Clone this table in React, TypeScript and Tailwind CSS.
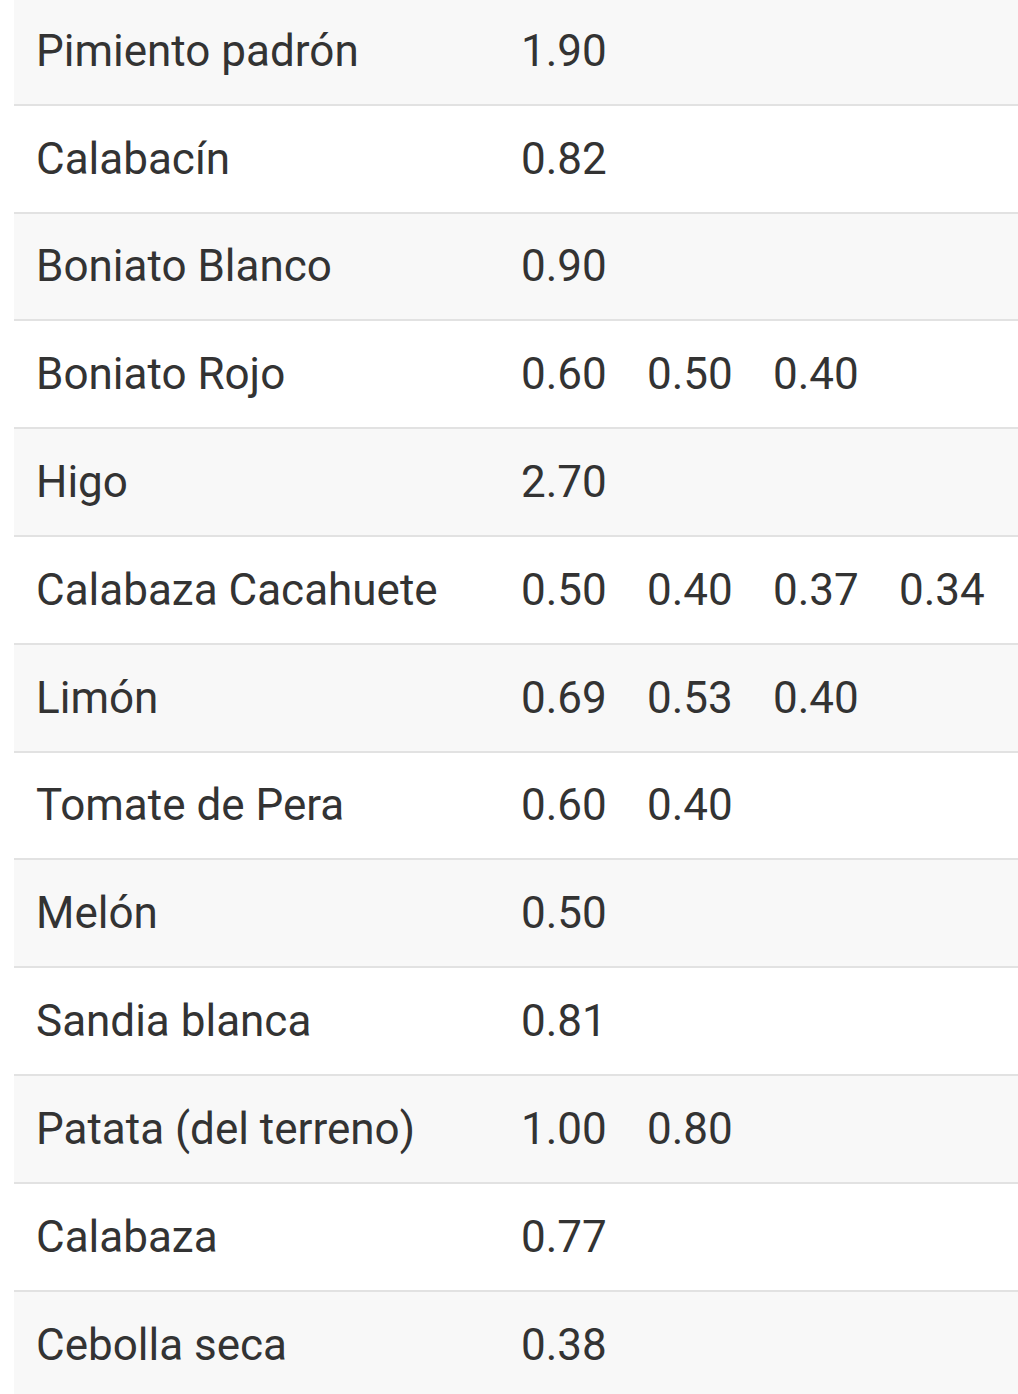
const rows: { name: string; prices: string[] }[] = [
  { name: "Pimiento padrón", prices: ["1.90"] },
  { name: "Calabacín", prices: ["0.82"] },
  { name: "Boniato Blanco", prices: ["0.90"] },
  { name: "Boniato Rojo", prices: ["0.60", "0.50", "0.40"] },
  { name: "Higo", prices: ["2.70"] },
  { name: "Calabaza Cacahuete", prices: ["0.50", "0.40", "0.37", "0.34"] },
  { name: "Limón", prices: ["0.69", "0.53", "0.40"] },
  { name: "Tomate de Pera", prices: ["0.60", "0.40"] },
  { name: "Melón", prices: ["0.50"] },
  { name: "Sandia blanca", prices: ["0.81"] },
  { name: "Patata (del terreno)", prices: ["1.00", "0.80"] },
  { name: "Calabaza", prices: ["0.77"] },
  { name: "Cebolla seca", prices: ["0.38"] },
];

const App = () => {
  return (
    <div className="w-[1018px] h-[1394px] overflow-hidden bg-white font-['Roboto',sans-serif] text-[44px] text-[#333333]">
      <div className="ml-[14px] mt-[-2px]">
        {rows.map((row, i) => (
          <div
            key={row.name}
            className={
              "grid grid-cols-[486px_126px_126px_126px_126px] items-center h-[107.8px] " +
              (i < rows.length - 1 ? "border-b-2 border-[#e2e2e2] " : "") +
              (i % 2 === 0 ? "bg-[#f8f8f8]" : "bg-white")
            }
          >
            <div className="pl-[22px] whitespace-nowrap">{row.name}</div>
            {[0, 1, 2, 3].map((k) => (
              <div key={k} className="pl-[21px]">
                {row.prices[k] ?? ""}
              </div>
            ))}
          </div>
        ))}
      </div>
    </div>
  );
};

export default App;
